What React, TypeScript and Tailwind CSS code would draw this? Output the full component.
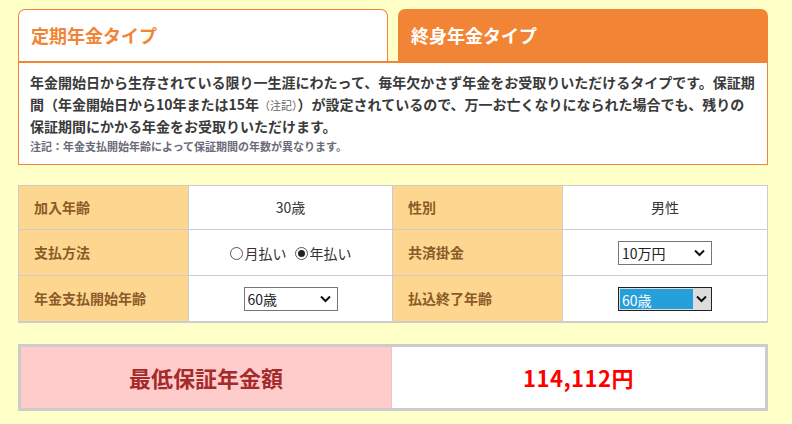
import React from "react";

const font = { fontFamily: '"Noto Sans CJK JP", "Noto Sans", sans-serif' };

const Chevron: React.FC = () => (
  <svg width="11" height="8" viewBox="0 0 11 8" className="shrink-0">
    <path d="M1 1.5 L5.5 6 L10 1.5" fill="none" stroke="#111" strokeWidth="2" />
  </svg>
);

const SelectBox: React.FC<{ value: string; focused?: boolean }> = ({ value, focused }) => {
  if (focused) {
    return (
      <div className="w-[94px] h-[24px] border border-[#222] bg-[#dddddd] flex items-stretch p-[1px]">
        <div className="w-[73px] bg-[#26a0da] text-white text-[14px] leading-[22px] pl-[2px]">{value}</div>
        <div className="flex-1 flex items-center justify-center">
          <Chevron />
        </div>
      </div>
    );
  }
  return (
    <div className="w-[94px] h-[24px] border border-[#767676] bg-white flex items-center justify-between pl-[3px] pr-[6px]">
      <span className="text-[14px] leading-[22px] text-[#222]">{value}</span>
      <Chevron />
    </div>
  );
};

const Radio: React.FC<{ checked?: boolean; label: string }> = ({ checked, label }) => (
  <span className="inline-flex items-center gap-[2px]">
    <span className="w-[13px] h-[13px] rounded-full border border-[#555] bg-white flex items-center justify-center">
      {checked && <span className="w-[7px] h-[7px] rounded-full bg-[#222]" />}
    </span>
    <span>{label}</span>
  </span>
);

const Label: React.FC<{ children: React.ReactNode }> = ({ children }) => (
  <div className="bg-[#fdd790] flex items-center pl-[15px] text-[14px] font-bold text-[#8c5a28]">{children}</div>
);

const Value: React.FC<{ children: React.ReactNode }> = ({ children }) => (
  <div className="bg-white flex items-center justify-center text-[14px] text-[#333]">{children}</div>
);

export default function App() {
  return (
    <div className="w-[792px] h-[424px] bg-[#ffffc8] px-[18px] pt-[9px] overflow-hidden" style={font}>
      <div className="w-[750px]">
        <div className="flex justify-between items-end">
          <div className="w-[370px] h-[52px] bg-white border border-b-0 border-[#f28535] rounded-t-[7px] flex items-center pl-[12px]">
            <span className="text-[18px] font-bold text-[#f28535]">定期年金タイプ</span>
          </div>
          <div className="w-[370px] h-[52px] bg-[#f28535] rounded-t-[7px] flex items-center pl-[13px]">
            <span className="text-[18px] font-bold text-white">終身年金タイプ</span>
          </div>
        </div>
        <div className="border border-t-2 border-[#f28535] bg-white h-[104px] pl-[11px] pt-[9px]">
          <p className="text-[14px] leading-[21.5px] font-bold text-[#3a3a3a] whitespace-nowrap">
            年金開始日から生存されている限り一生涯にわたって、毎年欠かさず年金をお受取りいただけるタイプです。保証期
            <br />
            間（年金開始日から10年または15年
            <span className="text-[11px] font-normal text-[#666]">（注記）</span>
            ）が設定されているので、万一お亡くなりになられた場合でも、残りの
            <br />
            保証期間にかかる年金をお受取りいただけます。
          </p>
          <p className="text-[11px] leading-[16px] font-bold text-[#6b6b7b]">
            注記：年金支払開始年齢によって保証期間の年数が異なります。
          </p>
        </div>

        <div className="mt-[20px] border border-b-2 border-[#cccccc] bg-[#cccccc] grid grid-cols-[169px_203px_169px_204px] grid-rows-[43px_45px_45px] gap-[1px]">
          <Label>加入年齢</Label>
          <Value>30歳</Value>
          <Label>性別</Label>
          <Value>男性</Value>

          <Label>支払方法</Label>
          <Value>
            <div className="flex items-center gap-[8px] pt-[2px]">
              <Radio label="月払い" />
              <Radio checked label="年払い" />
            </div>
          </Value>
          <Label>共済掛金</Label>
          <Value>
            <SelectBox value="10万円" />
          </Value>

          <Label>年金支払開始年齢</Label>
          <Value>
            <SelectBox value="60歳" />
          </Value>
          <Label>払込終了年齢</Label>
          <Value>
            <SelectBox value="60歳" focused />
          </Value>
        </div>

        <div className="mt-[21px] h-[67px] border-[3px] border-[#cccccc] flex">
          <div className="w-[371px] bg-[#ffcccc] border-r border-[#f4c0c0] flex items-center justify-center">
            <span className="text-[22px] font-bold text-[#a52a2a]">最低保証年金額</span>
          </div>
          <div className="flex-1 bg-white flex items-center justify-center">
            <span className="text-[22px] font-bold text-[#ff0000] tracking-[0.5px]">114,112円</span>
          </div>
        </div>
      </div>
    </div>
  );
}
